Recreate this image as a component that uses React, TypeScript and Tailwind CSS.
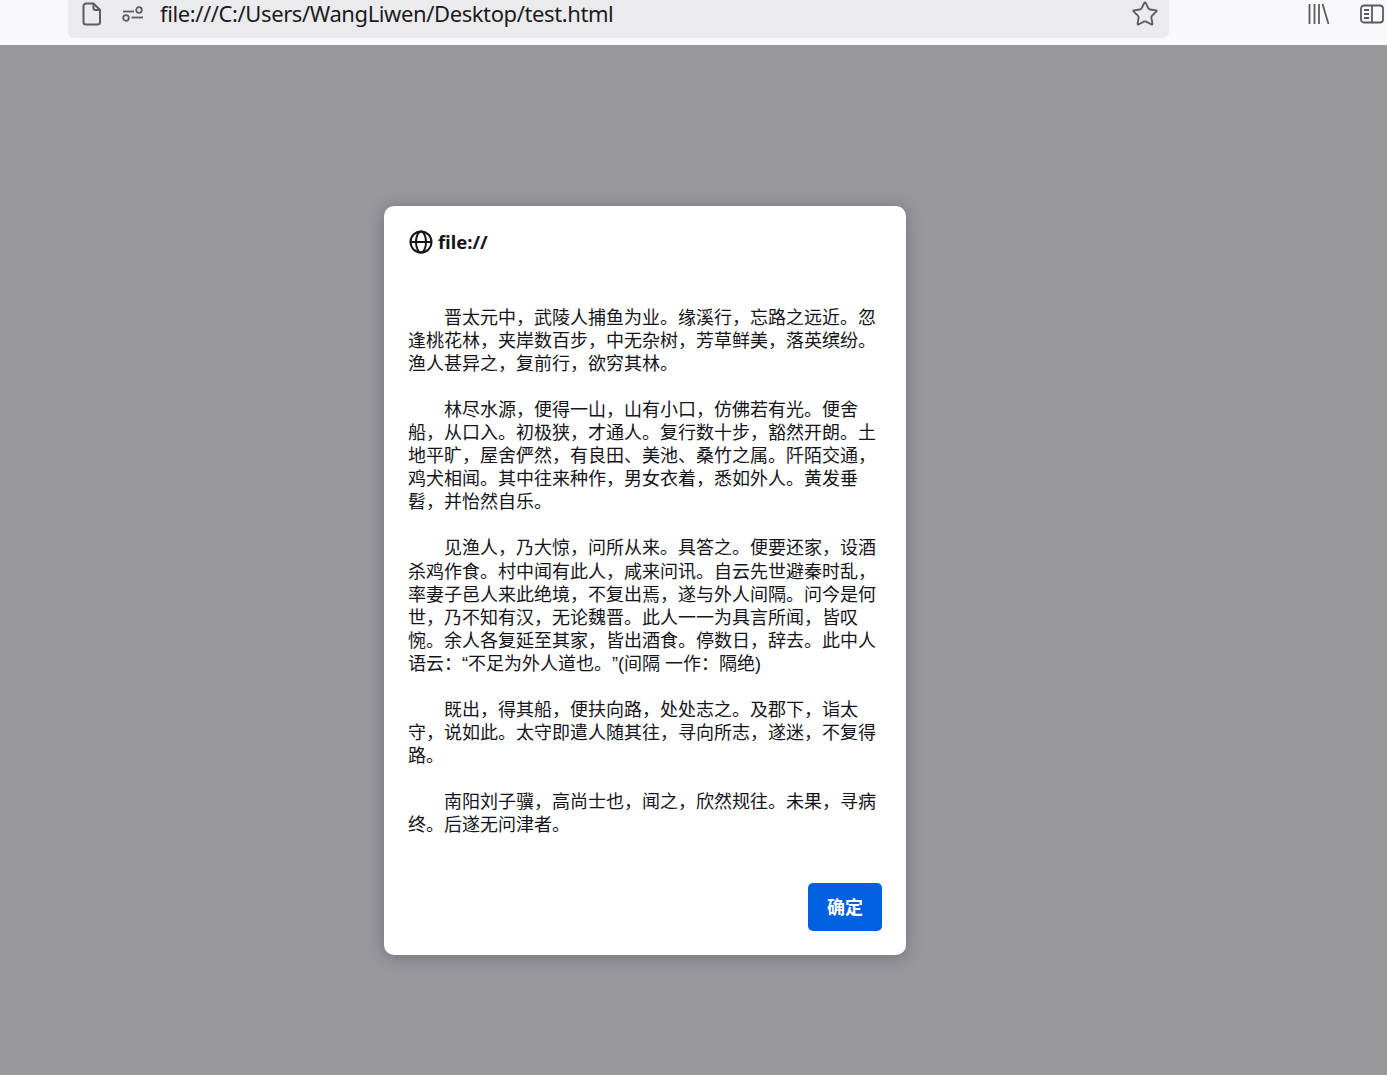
import { Star } from "lucide-react";

const paragraphs = [
  "晋太元中，武陵人捕鱼为业。缘溪行，忘路之远近。忽逢桃花林，夹岸数百步，中无杂树，芳草鲜美，落英缤纷。渔人甚异之，复前行，欲穷其林。",
  "林尽水源，便得一山，山有小口，仿佛若有光。便舍船，从口入。初极狭，才通人。复行数十步，豁然开朗。土地平旷，屋舍俨然，有良田、美池、桑竹之属。阡陌交通，鸡犬相闻。其中往来种作，男女衣着，悉如外人。黄发垂髫，并怡然自乐。",
  "见渔人，乃大惊，问所从来。具答之。便要还家，设酒杀鸡作食。村中闻有此人，咸来问讯。自云先世避秦时乱，率妻子邑人来此绝境，不复出焉，遂与外人间隔。问今是何世，乃不知有汉，无论魏晋。此人一一为具言所闻，皆叹惋。余人各复延至其家，皆出酒食。停数日，辞去。此中人语云：“不足为外人道也。”(间隔 一作：隔绝)",
  "既出，得其船，便扶向路，处处志之。及郡下，诣太守，说如此。太守即遣人随其往，寻向所志，遂迷，不复得路。",
  "南阳刘子骥，高尚士也，闻之，欣然规往。未果，寻病终。后遂无问津者。",
];

function FileIcon() {
  return (
    <svg width="20" height="24" viewBox="0 0 20 24" fill="none" stroke="#5b5b66" strokeWidth="2">
      <path d="M4 1.500h7.500l6.500 6.500v12a2.500 2.500 0 0 1-2.500 2.500h-11.500a2.500 2.500 0 0 1-2.500-2.500v-16a2.500 2.500 0 0 1 2.500-2.500z" />
      <path d="M11.500 1.500v4.500a2 2 0 0 0 2 2h4.500" />
    </svg>
  );
}

function PermissionsIcon() {
  return (
    <svg width="22" height="16" viewBox="0 0 22 16" fill="none" stroke="#5b5b66" strokeWidth="1.800">
      <path d="M1 5.500h11" />
      <circle cx="17" cy="4" r="2.800" />
      <circle cx="4" cy="12" r="2.800" />
      <path d="M9.500 11.500h11.500" />
    </svg>
  );
}

function LibraryIcon() {
  return (
    <svg width="22" height="22" viewBox="0 0 22 22" fill="none" stroke="#5b5b66" strokeWidth="1.800">
      <path d="M1.500 1v20M6.500 1v20M11 1v20M14.500 1l6 20" />
    </svg>
  );
}

function SidebarIcon() {
  return (
    <svg width="24" height="20" viewBox="0 0 24 20" fill="none" stroke="#5b5b66" strokeWidth="1.800">
      <rect x="1" y="1.500" width="22" height="17" rx="3" />
      <path d="M12 1.500v17M4 6h5M4 10h5M4 14h5" />
    </svg>
  );
}

function GlobeIcon() {
  return (
    <svg width="24" height="24" viewBox="0 0 24 24" fill="none" stroke="#15141a" strokeWidth="2">
      <circle cx="12" cy="12" r="10.500" />
      <ellipse cx="12" cy="12" rx="5" ry="10.500" />
      <path d="M1.500 12h21" />
    </svg>
  );
}

export default function App() {
  return (
    <div className="flex min-h-[1075px] w-[1387px] flex-col overflow-hidden bg-[#98979c] font-['Liberation_Sans','Noto_Sans_CJK_SC',sans-serif] text-[#15141a]">
      <header className="flex h-[45px] items-start border-b border-[#fbfbfd] bg-[#f9f9fb] pl-[68px]">
        <div className="flex h-[38px] w-[1101px] items-center rounded-b-[6px] bg-[#ebebee] pb-[10px] pl-[14px] pr-[10px]">
          <FileIcon />
          <span className="ml-[20px]">
            <PermissionsIcon />
          </span>
          <span className="ml-[16px] flex-1 pb-[2px] font-['Noto_Sans',sans-serif] text-[22px] leading-[24px] tracking-[-0.4px] text-[#1c1b22]">
            file:///C:/Users/WangLiwen/Desktop/test.html
          </span>
          <Star size={28} strokeWidth={1.600} color="#5b5b66" />
        </div>
        <div className="ml-[139px] mt-[3px] flex items-center gap-[30px]">
          <LibraryIcon />
          <SidebarIcon />
        </div>
      </header>
      <main className="flex-1 pl-[384px] pt-[161px]">
        <div className="flex h-[749px] w-[522px] flex-col rounded-[10px] bg-white p-[24px] shadow-[0_2px_16px_rgba(58,57,68,0.4)]">
          <div className="flex h-[24px] items-center gap-[5px] pl-[1px]">
            <GlobeIcon />
            <span className="font-['Noto_Sans',sans-serif] text-[18.500px] font-bold leading-[24px]">file://</span>
          </div>
          <div className="mt-[53px] flex-1 text-[18px] leading-[23.050px] [text-spacing-trim:space-all]">
            {paragraphs.map((p) => (
              <p key={p} className="mb-[23.050px] indent-[36px]">
                {p}
              </p>
            ))}
          </div>
          <div className="flex justify-end">
            <button className="h-[48px] w-[74px] rounded-[5px] bg-[#0060df] pt-[2px] text-[18px] font-bold text-white">确定</button>
          </div>
        </div>
      </main>
    </div>
  );
}
